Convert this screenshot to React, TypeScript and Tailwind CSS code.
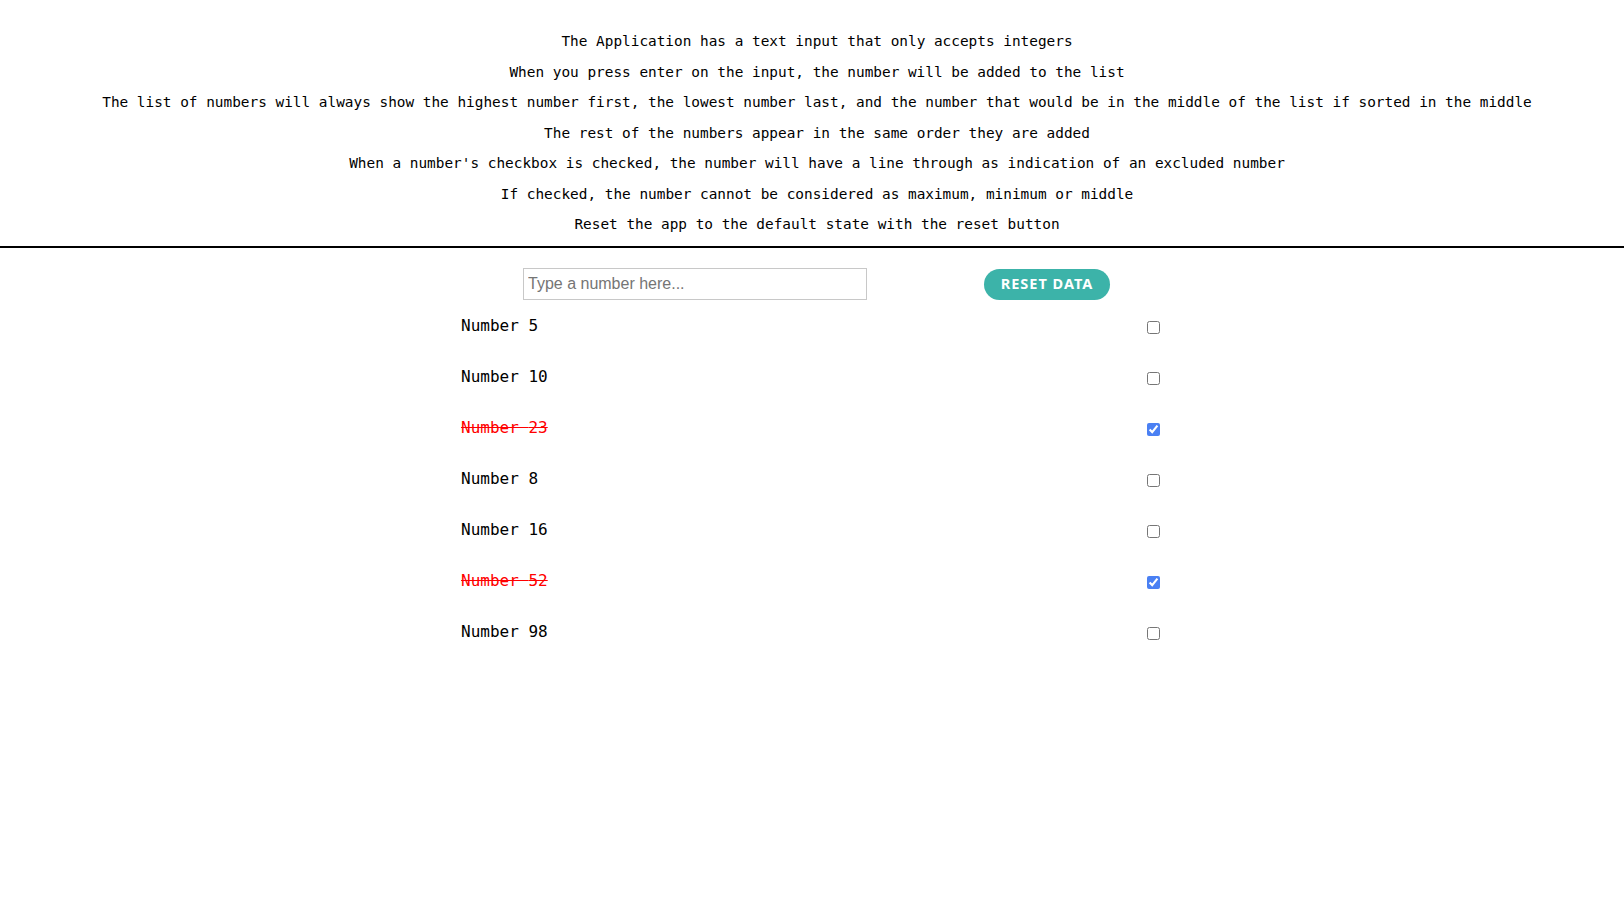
import { useState } from 'react'

const rules = [
  'The Application has a text input that only accepts integers',
  'When you press enter on the input, the number will be added to the list',
  'The list of numbers will always show the highest number first, the lowest number last, and the number that would be in the middle of the list if sorted in the middle',
  'The rest of the numbers appear in the same order they are added',
  "When a number's checkbox is checked, the number will have a line through as indication of an excluded number",
  'If checked, the number cannot be considered as maximum, minimum or middle',
  'Reset the app to the default state with the reset button',
]

const initial = [
  { value: 5, excluded: false },
  { value: 10, excluded: false },
  { value: 23, excluded: true },
  { value: 8, excluded: false },
  { value: 16, excluded: false },
  { value: 52, excluded: true },
  { value: 98, excluded: false },
]

export default function App() {
  const [numbers, setNumbers] = useState(initial)
  const [text, setText] = useState('')

  const toggle = (i: number) => {
    setNumbers(numbers.map((n, idx) => (idx === i ? { ...n, excluded: !n.excluded } : n)))
  }

  return (
    <div className="min-h-screen bg-white text-black font-['DejaVu_Sans_Mono',monospace]">
      <header className="pt-[33px] pb-[13px] pl-[10px] border-b-2 border-black">
        <div className="flex flex-col gap-[13.5px] text-center text-[14.4px] leading-[17px]">
          {rules.map((r) => (
            <p key={r}>{r}</p>
          ))}
        </div>
      </header>

      <div className="w-[702px] mx-auto pt-[20px]">
        <div className="flex items-center">
          <input
            type="text"
            value={text}
            onChange={(e) => setText(e.target.value)}
            placeholder="Type a number here..."
            className="ml-[62px] w-[344px] h-[32px] border border-[#c8c8c8] px-[4px] text-[16px] font-['Liberation_Sans',sans-serif] placeholder:text-[#757575] outline-none"
          />
          <button
            onClick={() => setNumbers(initial)}
            className="ml-[117px] w-[126px] h-[31px] rounded-full bg-[#3cb3a9] text-white text-[14.5px] font-bold tracking-[1px] font-['Noto_Sans',sans-serif]"
          >
            RESET DATA
          </button>
        </div>

        <ul>
          {numbers.map((n, i) => (
            <li key={n.value} className="h-[51px] flex items-center justify-between">
              <span
                className={
                  n.excluded ? 'text-[16px] text-[#ff0000] line-through' : 'text-[16px]'
                }
              >
                Number {n.value}
              </span>
              <input
                type="checkbox"
                checked={n.excluded}
                onChange={() => toggle(i)}
                className="mt-[4px] mr-[3px] accent-[#4a80f3]"
              />
            </li>
          ))}
        </ul>
      </div>
    </div>
  )
}
